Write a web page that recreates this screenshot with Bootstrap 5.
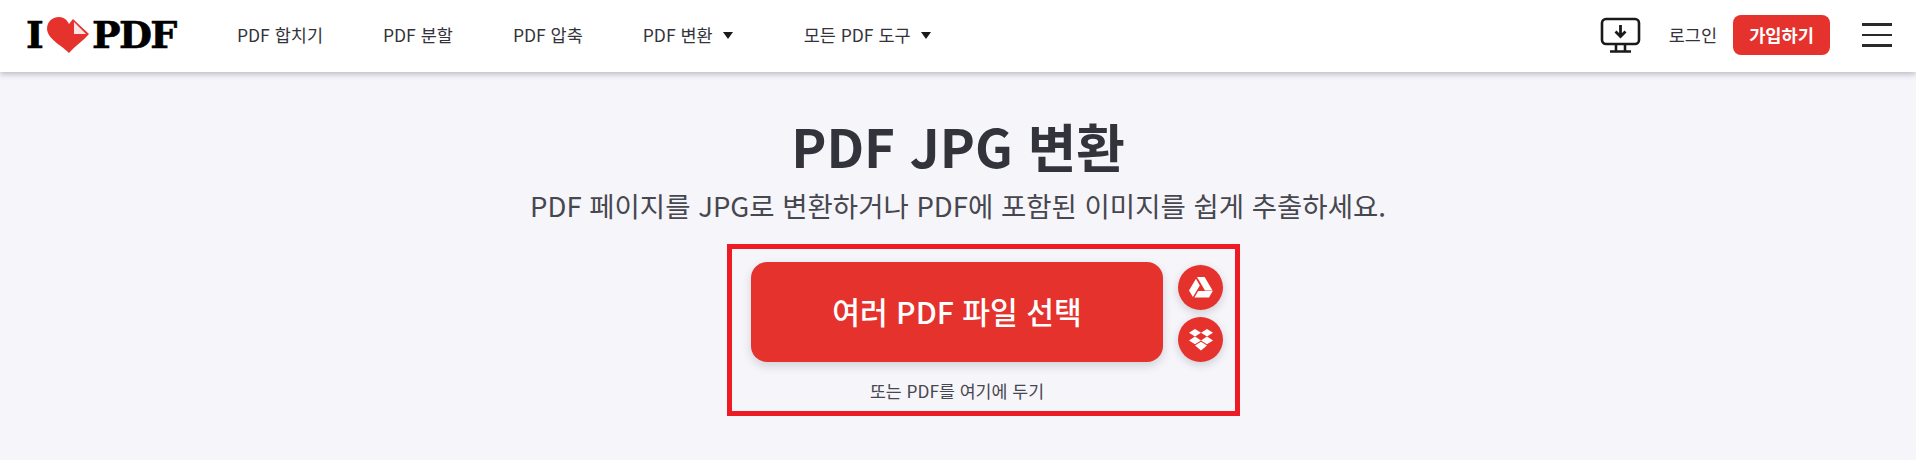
<!DOCTYPE html>
<html lang="ko">
<head>
<meta charset="utf-8">
<title>PDF JPG 변환</title>
<link href="https://cdn.jsdelivr.net/npm/bootstrap@5.3.0/dist/css/bootstrap.min.css" rel="stylesheet">
<style>
html,body{height:100%;overflow:hidden}
body{background:#f5f5fa;font-family:"Noto Sans CJK KR","Noto Sans",sans-serif;color:#33333b}
.topbar{height:72px;background:#fff;box-shadow:0 2px 6px rgba(70,70,90,.35);padding:0 24px 2px 26px}
.logo{width:152px;height:50px;margin-right:59px;font-family:"DejaVu Serif",serif;font-weight:700;font-size:38px;line-height:50px;color:#000;-webkit-text-stroke:.6px #000;letter-spacing:-1.7px;flex:none;white-space:nowrap}
.logo svg{width:42px;height:37px;margin:0 3px 0 5px;flex:none}
.menu-link{font-size:17.5px;color:#33333b;text-decoration:none;white-space:nowrap;line-height:20px}
.menu-gap{margin-right:60px}
.menu-gap-wide{margin-right:71px}
.caret{display:inline-block;width:0;height:0;border-left:5.5px solid transparent;border-right:5.5px solid transparent;border-top:7px solid #1a1a1a;margin-left:10px;vertical-align:3px}
.dl-icon{width:41px;height:36px;margin-right:28px}
.signin{margin-right:16px}
.signup{width:97px;height:40px;background:#e5322d;border-radius:8px;color:#fff;font-size:17.6px;font-weight:700;border:0;padding:0;margin-right:32px}
.burger{width:30px;gap:8px}
.burger span{height:2.5px;background:#2a2a2a;display:block}
.headline{font-size:52.8px;font-weight:700;line-height:64px;margin:41px 0 0;color:#33333b;text-align:center}
.subline{font-size:27.5px;line-height:40px;margin:8px 0 0;color:#47474f;text-align:center;font-weight:400}
.dropbox{width:513px;height:172px;border:5px solid #ed1c24;margin:19px 0 0 727px;padding:13px 12px 0 19px}
.pick{width:412px;height:100px;background:#e5322d;color:#fff;border:0;border-radius:16px;font-size:30.2px;font-weight:500;box-shadow:0 4px 10px rgba(50,50,70,.18);padding:0}
.side{margin-left:15px;margin-top:3px;gap:7px}
.circle{width:45px;height:45px;border-radius:50%;background:#e5322d;box-shadow:0 3px 8px rgba(50,50,70,.2)}
.hint{font-size:17.3px;line-height:20px;color:#47474f;width:412px;margin-top:19px;text-align:center}
</style>
</head>
<body>
<nav class="topbar d-flex align-items-center">
  <div class="logo d-flex align-items-center">I<svg viewBox="0 0 42 37" aria-hidden="true"><path d="M22 36C16 29 1 23 0 12C0 4 6 0 12 0C17 0 20 3 22 7L26 2L42 17C36 24 28 29 22 36Z" fill="#e5322d"/><path d="M27 5L39 17H27Z" fill="#fbe6e5"/></svg>PDF</div>
  <a class="menu-link menu-gap" href="#">PDF 합치기</a>
  <a class="menu-link menu-gap" href="#">PDF 분할</a>
  <a class="menu-link menu-gap" href="#">PDF 압축</a>
  <a class="menu-link menu-gap-wide" href="#">PDF 변환<span class="caret"></span></a>
  <a class="menu-link" href="#">모든 PDF 도구<span class="caret"></span></a>
  <div class="ms-auto d-flex align-items-center">
    <svg class="dl-icon" viewBox="0 0 41 36" fill="none" stroke="#1a1a1a" stroke-width="2.6" aria-hidden="true"><rect x="2" y="2" width="37" height="25" rx="4"/><path d="M20.5 8V19M15.5 14.5L20.5 19.5L25.5 14.5" stroke-width="2.8"/><path d="M16 27V34M25 27V34M10 34.5H31" stroke-width="2.6"/></svg>
    <a class="menu-link signin" href="#">로그인</a>
    <button class="signup" type="button">가입하기</button>
    <div class="burger d-flex flex-column"><span></span><span></span><span></span></div>
  </div>
</nav>
<main>
  <h1 class="headline">PDF JPG 변환</h1>
  <h2 class="subline">PDF 페이지를 JPG로 변환하거나 PDF에 포함된 이미지를 쉽게 추출하세요.</h2>
  <div class="dropbox">
    <div class="d-flex">
      <button class="pick" type="button">여러 PDF 파일 선택</button>
      <div class="side d-flex flex-column">
        <div class="circle d-flex align-items-center justify-content-center">
          <svg width="24" height="21" viewBox="0 0 24 21" fill="#fff" aria-hidden="true"><path d="M8 0H15.6L23.6 13.6H16Z"/><path d="M7 1.8L10.8 8.4L3.9 20L0 13.4Z"/><path d="M5.4 20.6L9.2 14H23.8L20 20.6Z"/></svg>
        </div>
        <div class="circle d-flex align-items-center justify-content-center">
          <svg width="24" height="22" viewBox="0 0 24 22" fill="#fff" aria-hidden="true"><path d="M6 0L12 3.8L6 7.6L0 3.8Z"/><path d="M18 0L24 3.8L18 7.6L12 3.8Z"/><path d="M6 7.6L12 11.4L6 15.2L0 11.4Z"/><path d="M18 7.6L24 11.4L18 15.2L12 11.4Z"/><path d="M6 16.6L12 12.8L18 16.6L12 21.6Z"/></svg>
        </div>
      </div>
    </div>
    <div class="hint">또는 PDF를 여기에 두기</div>
  </div>
</main>
<script src="https://cdn.jsdelivr.net/npm/bootstrap@5.3.0/dist/js/bootstrap.bundle.min.js"></script>
</body>
</html>
